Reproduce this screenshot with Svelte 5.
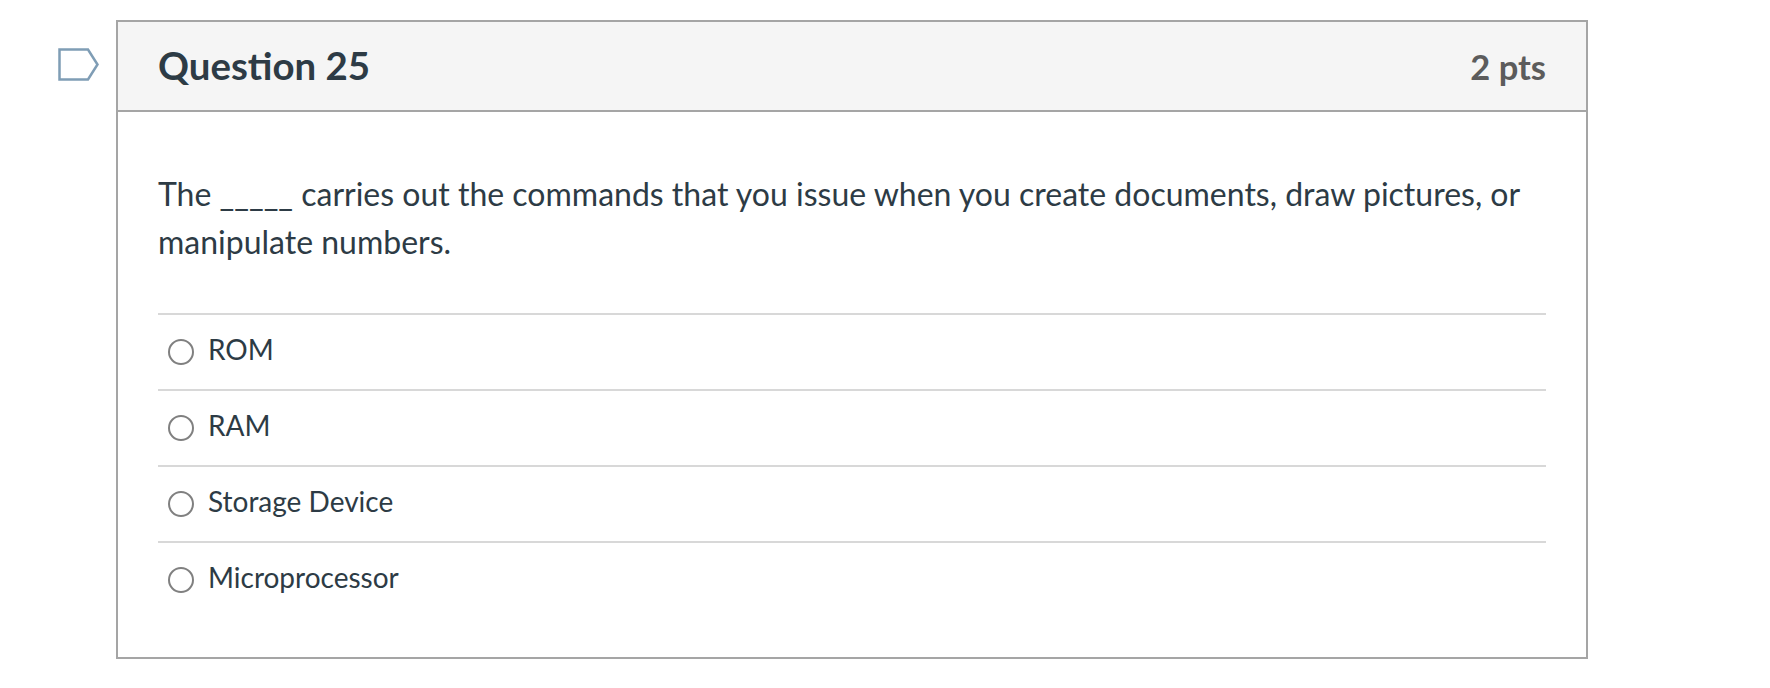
<script>
	const answers = ['ROM', 'RAM', 'Storage Device', 'Microprocessor'];
</script>

<div class="page">
	<svg class="flag" width="42" height="34" viewBox="0 0 42 34" fill="none">
		<path d="M1.5 1.5H30L39.5 16.5L30 31.5H1.5Z" stroke="#7f9db5" stroke-width="2.5" />
	</svg>
	<div class="question">
		<header class="question-header">
			<h2>Question 25</h2>
			<span class="points">2 pts</span>
		</header>
		<div class="question-body">
			<p class="question-text">
				The _____ carries out the commands that you issue when you create documents, draw pictures, or manipulate numbers.
			</p>
			<div class="answers">
				{#each answers as answer}
					<label class="answer">
						<span class="radio"></span>
						<span class="answer-label">{answer}</span>
					</label>
				{/each}
			</div>
		</div>
	</div>
</div>

<style>
	:global(body) {
		background: #fff;
	}
	.page {
		display: flex;
		align-items: flex-start;
		padding: 20px 0 0 58px;
		font-family: Lato, sans-serif;
		color: #2d3b45;
	}
	.flag {
		margin-top: 28px;
		margin-right: 16px;
		flex: none;
	}
	.question {
		width: 1472px;
		height: 639px;
		box-sizing: border-box;
		border: 2px solid #a5a5a5;
	}
	.question-header {
		display: flex;
		justify-content: space-between;
		align-items: center;
		box-sizing: border-box;
		height: 90px;
		padding: 0 40px;
		background: #f5f5f5;
		border-bottom: 2px solid #a5a5a5;
	}
	h2 {
		margin: 0 0 2px;
		font-size: 38.4px;
		font-weight: 700;
	}
	.points {
		font-size: 34.5px;
		font-weight: 700;
		color: #5c5c5c;
	}
	.question-body {
		padding: 58px 40px 0;
	}
	.question-text {
		margin: 0 0 47px;
		font-size: 32px;
		line-height: 48px;
	}
	.answer {
		display: flex;
		align-items: center;
		box-sizing: border-box;
		height: 76px;
		padding-left: 10px;
		border-top: 2px solid #d8d8d8;
	}
	.radio {
		width: 26px;
		height: 26px;
		box-sizing: border-box;
		border: 2px solid #808080;
		border-radius: 50%;
		margin-right: 14px;
	}
	.answer-label {
		font-size: 28px;
		margin-top: -6px;
	}
</style>
